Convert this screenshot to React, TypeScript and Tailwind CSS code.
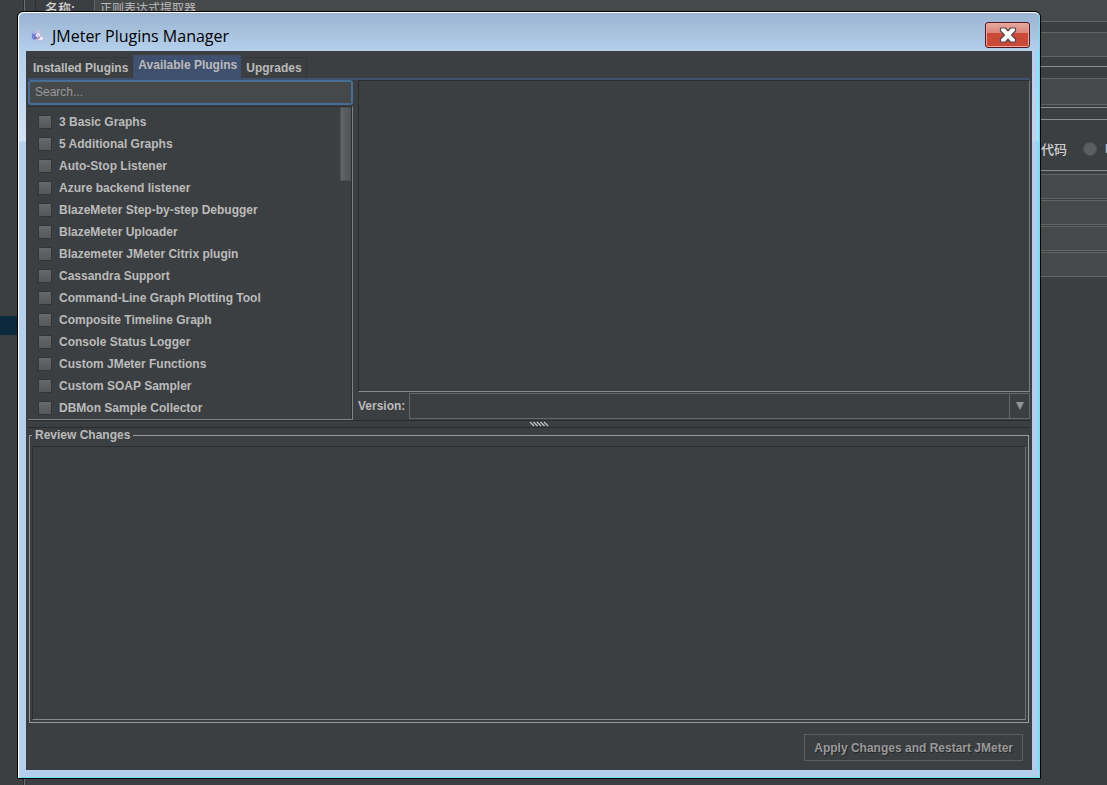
import type { ReactNode } from "react";

const plugins = [
  "3 Basic Graphs",
  "5 Additional Graphs",
  "Auto-Stop Listener",
  "Azure backend listener",
  "BlazeMeter Step-by-step Debugger",
  "BlazeMeter Uploader",
  "Blazemeter JMeter Citrix plugin",
  "Cassandra Support",
  "Command-Line Graph Plotting Tool",
  "Composite Timeline Graph",
  "Console Status Logger",
  "Custom JMeter Functions",
  "Custom SOAP Sampler",
  "DBMon Sample Collector",
];

function Tab({ children, active = false }: { children: ReactNode; active?: boolean }) {
  return (
    <button
      type="button"
      role="tab"
      aria-selected={active}
      className={
        active
          ? "h-[23px] bg-[#40506f] px-1 pb-[3px] pl-[5px] leading-4"
          : "h-[21px] border-t border-r border-[#35383a] pr-1 pb-px pl-[5px] leading-4"
      }
    >
      {children}
    </button>
  );
}

function PluginRow({ name }: { name: string }) {
  return (
    <li>
      <label className="flex h-[22px] items-center gap-[7px] pl-2.5">
        <input
          type="checkbox"
          className="size-3.5 appearance-none border border-[#333638] bg-linear-to-b from-[#66696b] to-[#55585a]"
        />
        <span>{name}</span>
      </label>
    </li>
  );
}

// The editor window that stays behind the dialog
function Editor() {
  return (
    <div className="flex min-h-screen">
      <div className="w-6 shrink-0 border-r border-[#2b2d2e] pt-[316px]">
        <div className="h-[19px] bg-[#0d293e]" />
      </div>
      <div className="min-w-0 flex-1 border-l border-[#6a6d6e] pl-2.5">
        <div className="flex h-[22px] border-l border-[#2e3132] font-['Noto_Sans_CJK_SC',sans-serif]">
          <label htmlFor="name" className="w-[58px] pl-[9px] text-[13px] leading-4 font-medium text-[#d0d0d0]">
            名称:
          </label>
          <input
            id="name"
            defaultValue="正则表达式提取器"
            className="min-w-0 flex-1 border-b border-l border-[#646464] bg-[#45494a] pb-1.5 pl-[5px] text-xs leading-4 font-normal"
          />
        </div>
        <input
          aria-label="注释"
          className="mt-2.5 block h-[25px] w-full border-y border-[#646464] bg-[#45494a]"
        />
        <div className="mt-[9px] border-y border-[#8c8f90] pt-[11px] pb-0.5">
          <input
            aria-label="Apply to"
            className="block h-[27px] w-full border-y border-[#646464] bg-[#45494a]"
          />
        </div>
        <div className="mt-[11px] flex h-[52px] items-center justify-end gap-4 border-y border-[#8c8f90] pt-2">
          <label htmlFor="code" className="font-['Noto_Sans_CJK_SC',sans-serif] text-[13px] font-medium text-[#d0d0d0]">
            代码
          </label>
          <input
            id="code"
            type="radio"
            className="size-3.5 appearance-none rounded-full border border-[#4d5052] bg-[#5c5f61]"
          />
          <span className="-ml-2 w-[2px] overflow-hidden">M</span>
        </div>
        <div className="mt-[3px] flex flex-col gap-px">
          {["引用名称", "正则表达式", "模板", "匹配数字"].map((label) => (
            <input
              key={label}
              aria-label={label}
              className="block h-[25px] w-full border-y border-[#646464] bg-[#45494a]"
            />
          ))}
        </div>
      </div>
    </div>
  );
}

function TitleBar() {
  return (
    <header className="flex h-[38px] shrink-0 items-start justify-between pr-0.5 pl-1">
      <div className="flex items-center gap-1.5 pt-[11px]">
        <svg viewBox="0 0 16 16" className="size-4">
          <circle cx="3.5" cy="5" r="2" fill="#a9b4e6" />
          <circle cx="7.5" cy="4" r="1.8" fill="#cbb9dd" />
          <circle cx="4.5" cy="9" r="2.8" fill="#7b8bd8" />
          <circle cx="8" cy="7.5" r="2.4" fill="#e5dcf2" />
          <ellipse cx="10.5" cy="10.5" rx="3.2" ry="2.3" fill="#eeeefa" stroke="#a49bd0" strokeWidth=".7" />
          <path d="M2 6l2 1.5 2-2M4 11l1.500-2.500 2 2" stroke="#5765b9" fill="none" />
          <circle cx="9" cy="10" r=".9" fill="#bb7899" />
        </svg>
        <h1 className="font-['Open_Sans',sans-serif] text-base leading-6 font-normal text-black">
          JMeter Plugins Manager
        </h1>
      </div>
      <button
        type="button"
        aria-label="Close"
        className="mt-[9px] flex h-[26px] w-[45px] items-center justify-center rounded-[3px] border border-[#55161c] bg-linear-to-b from-[#e9a99f] from-0% via-[#d98479] via-42% to-[#c94a38] to-43% shadow-[inset_0_0_0_1px_#eba79d]"
      >
        <svg viewBox="0 0 18 16" className="h-4 w-[18px]">
          <path
            d="M1.500 1h5L9 3.800 11.500 1h5v3L12.500 8l4 4v3h-5L9 12.200 6.500 15h-5v-3l4-4-4-4z"
            fill="#fff"
            stroke="#5b4650"
            strokeWidth="1.2"
            strokeLinejoin="round"
          />
        </svg>
      </button>
    </header>
  );
}

export default function App() {
  return (
    <div className="relative min-h-screen overflow-hidden bg-[#3c3f41] font-['Liberation_Sans',Arial,sans-serif] text-xs font-bold text-[#bbbbbb]">
      <Editor />

      <section
        role="dialog"
        aria-label="JMeter Plugins Manager"
        className="absolute top-[11px] right-[66px] bottom-[6px] left-[17px] flex flex-col rounded-t-md border border-black bg-[linear-gradient(to_bottom,#9ab3d0,#b5d0ec_40px,#d5e3f6_129px,#b5d0ec_130px)] shadow-[inset_-1px_-1px_0_#6fdcf5]"
      >
        <div className="flex min-h-0 flex-1 flex-col rounded-t-md border-t border-l border-white pr-2 pb-2 pl-[7px]">
          <TitleBar />

          <main className="flex min-h-0 flex-1 flex-col bg-[#3c3f41] px-0.5 pt-1 shadow-[4px_0_0_rgba(230,190,225,0.4),7px_0_0_rgba(110,220,255,0.4)]">
            <div role="tablist" className="flex items-end border-b-2 border-[#40506f]">
              <Tab>Installed Plugins</Tab>
              <Tab active>Available Plugins</Tab>
              <Tab>Upgrades</Tab>
            </div>

            <div className="flex shrink-0 gap-[5px]">
              <div className="w-[325px] shrink-0">
                <input
                  type="text"
                  aria-label="Search plugins"
                  placeholder="Search..."
                  className="block h-[25px] w-full rounded-[3px] border-2 border-[#466d94] bg-[#45494a] px-[5px] pb-0.5 font-normal placeholder:text-[#999999]"
                />
                <div className="mt-px flex justify-between border-t border-r border-b border-t-[#2d2f31] border-r-[#808385] border-b-[#808385]">
                  <ul className="min-w-0 flex-1 pt-1">
                    {plugins.map((name) => (
                      <PluginRow key={name} name={name} />
                    ))}
                  </ul>
                  <div className="w-3 border-r border-[#2d2f31]">
                    <div className="h-[74px] border border-[#505355] bg-linear-to-r from-[#626567] to-[#525557]" />
                  </div>
                </div>
              </div>

              <div className="flex min-w-0 flex-1 flex-col pb-px">
                <div className="flex-1 border border-t-[#2a2c2e] border-r-[#777a7b] border-b-[#858889] border-l-[#2a2c2e]" />
                <div className="mt-px flex items-center gap-1">
                  <label htmlFor="version">Version:</label>
                  <div className="relative flex-1">
                    <select
                      id="version"
                      className="block h-[26px] w-full appearance-none border border-[#646768] bg-[#3c3f41]"
                    />
                    <span className="pointer-events-none absolute inset-y-0 right-0 flex w-[21px] items-center justify-center border-l border-[#646768]">
                      <svg viewBox="0 0 8 8" className="size-2">
                        <path d="M0 0h8L4 8z" fill="#929596" />
                      </svg>
                    </span>
                  </div>
                </div>
              </div>
            </div>

            <div className="flex h-2 shrink-0 items-center justify-center border-y border-[#292b2d] pl-5">
              <svg viewBox="0 0 20 6" className="h-1.5 w-5">
                <path
                  d="M1 1l4 4M4.500 1l4 4M8 1l4 4M11.500 1l4 4M15 1l4 4"
                  stroke="#c0c3c4"
                  strokeWidth="1.3"
                />
              </svg>
            </div>

            <fieldset className="mx-px flex min-h-0 flex-1 flex-col border border-[#9a9c9d] px-0.5 pb-0.5">
              <legend className="px-[3px] leading-[14px]">Review Changes</legend>
              <div className="mt-1 flex-1 border border-t-[#2a2c2e] border-r-[#6f7273] border-b-[#858889] border-l-[#2a2c2e]" />
            </fieldset>

            <div className="flex justify-end pt-[11px] pr-[7px] pb-[9px]">
              <button
                type="button"
                disabled
                className="h-[27px] border border-[#5b5e60] px-[9px] text-[#999999] [text-shadow:1px_1px_0_#252729]"
              >
                Apply Changes and Restart JMeter
              </button>
            </div>
          </main>
        </div>
      </section>
    </div>
  );
}
